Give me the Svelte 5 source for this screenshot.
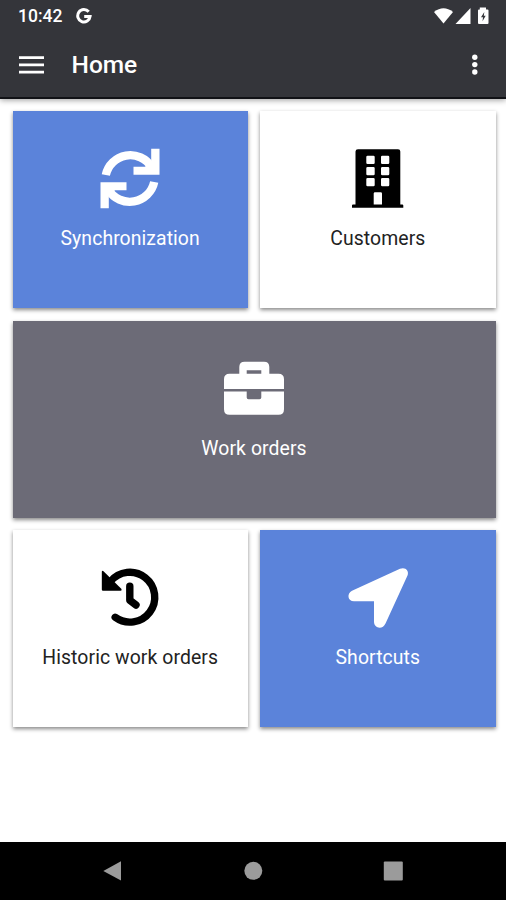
<script>
  const tiles = [
    { label: 'Synchronization', icon: 'sync', tone: 'blue' },
    { label: 'Customers', icon: 'building', tone: 'white' },
    { label: 'Work orders', icon: 'briefcase', tone: 'gray' },
    { label: 'Historic work orders', icon: 'history', tone: 'white' },
    { label: 'Shortcuts', icon: 'arrow', tone: 'blue' }
  ];
</script>

<div class="phone">
  <header>
    <div class="status">
      <span class="time">10:42</span>
      <svg class="google" width="16" height="16" viewBox="0 0 16 16"><path d="M12.7 3.8A6.2 6.2 0 1 0 14.1 8.4H8.2" fill="none" stroke="#fff" stroke-width="3" /></svg>
      <svg class="signals" width="60" height="20" viewBox="0 0 60 20" fill="#fff">
        <path d="M1 8Q10.5.5 20 8L10.5 19.5Z" />
        <path d="M37.5 4V20H22.5Z" />
        <path fill-rule="evenodd" d="M49.3 3.5H46.8V5.5H46Q45 5.5 45 6.5V19Q45 20 46 20H54.5Q55.5 20 55.5 19V6.5Q55.5 5.5 54.5 5.5H53V3.5ZM51.3 8L48 13.3H50L49.5 17.3L52.7 11.8H50.8Z" />
      </svg>
    </div>
    <div class="bar">
      <svg width="26" height="20" viewBox="0 0 26 20" fill="#fff"><path d="M0 1.2H25V3.9H0ZM0 8.6H25V11.3H0ZM0 15.8H25V18.5H0Z" /></svg>
      <h1>Home</h1>
      <svg class="more" width="8" height="24" viewBox="0 0 8 24" fill="#fff"><circle cx="3.8" cy="4.2" r="2.7" /><circle cx="3.8" cy="11.6" r="2.7" /><circle cx="3.8" cy="19" r="2.7" /></svg>
    </div>
  </header>

  <main>
    {#each tiles as tile}
      <section class={tile.tone}>
        <svg width="64" height="64" viewBox="0 0 64 64" fill="currentColor">
          {#if tile.icon === 'sync'}
            <path d="M7.8 28A25 25 0 0 1 53.5 20" fill="none" stroke="currentColor" stroke-width="8.4" />
            <path d="M53.2 1.8H61.5V27.8H35.5V19.8H47L53.2 14Z" />
            <path d="M56.2 35A25 25 0 0 1 10.5 43" fill="none" stroke="currentColor" stroke-width="8.4" />
            <path d="M10.8 61.2H2.5V35.2H28.5V43.2H17L10.8 49Z" />
          {:else if tile.icon === 'building'}
            <path fill-rule="evenodd" d="M12 2.3H52Q54.3 2.3 54.3 4.6V57.5H56.3Q57.3 57.5 57.3 58.5V60.8H6V58.5Q6 57.5 7 57.5H9.5V4.6Q9.5 2.3 12 2.3ZM21.5 8.7Q20.3 8.7 20.3 9.9V15.8Q20.3 17 21.5 17H27.5Q28.7 17 28.7 15.8V9.9Q28.7 8.7 27.5 8.7ZM36.2 8.7Q35 8.7 35 9.9V15.8Q35 17 36.2 17H42.1Q43.3 17 43.3 15.8V9.9Q43.3 8.7 42.1 8.7ZM21.5 20Q20.3 20 20.3 21.2V27.1Q20.3 28.3 21.5 28.3H27.5Q28.7 28.3 28.7 27.1V21.2Q28.7 20 27.5 20ZM36.2 20Q35 20 35 21.2V27.1Q35 28.3 36.2 28.3H42.1Q43.3 28.3 43.3 27.1V21.2Q43.3 20 42.1 20ZM21.5 31Q20.3 31 20.3 32.2V38.1Q20.3 39.3 21.5 39.3H27.5Q28.7 39.3 28.7 38.1V32.2Q28.7 31 27.5 31ZM36.2 31Q35 31 35 32.2V38.1Q35 39.3 36.2 39.3H42.1Q43.3 39.3 43.3 38.1V32.2Q43.3 31 42.1 31ZM29 45.3Q27.7 45.3 27.7 46.6V57.6H36V46.6Q36 45.3 34.7 45.3Z" />
          {:else if tile.icon === 'briefcase'}
            <path fill-rule="evenodd" d="M2 32V22.2Q2 16.7 7.5 16.7H17.3V10Q17.3 4.7 22.6 4.7H42Q47.3 4.7 47.3 10V16.7H56.5Q62 16.7 62 22.2V32ZM24.7 13.2V16.7H39.3V13.2Z" />
            <path d="M2 34.5H24.7V40.5Q24.7 42.3 26.5 42.3H37.5Q39.3 42.3 39.3 40.5V34.5H62V52.2Q62 57.7 56.5 57.7H7.5Q2 57.7 2 52.2Z" />
          {:else if tile.icon === 'history'}
            <path d="M12.5 15.5A24.9 24.9 0 1 1 17.2 51.3M31.8 20.3V34.2L38 39" fill="none" stroke="currentColor" stroke-width="7.4" stroke-linecap="round" stroke-linejoin="round" />
            <path d="M3.8 6Q3.8 4 5.5 5.3L23 22.5Q24.5 24.5 22.5 24.7H5Q3.8 24.7 3.8 23.5Z" />
          {:else}
            <path d="M54 2.8L6 24.8C.6 27.5 1.5 35.3 8 35.3H28V55.5C28 62.7 36.8 64 39.5 57.5L61.5 9.5C63.5 4.5 59 .5 54 2.8Z" />
          {/if}
        </svg>
        <span>{tile.label}</span>
      </section>
    {/each}
  </main>

  <nav>
    <svg width="20" height="22" viewBox="0 0 20 22"><path d="M18 1.2V20.5L.3 10.9Z" /></svg>
    <svg width="20" height="22" viewBox="0 0 20 22"><circle cx="10.3" cy="10.8" r="9" /></svg>
    <svg width="20" height="22" viewBox="0 0 20 22"><rect x=".8" y="1.6" width="19" height="19" rx="1" /></svg>
  </nav>
</div>

<style>
  .phone {
    width: 506px;
    height: 900px;
    display: flex;
    flex-direction: column;
    background: #fff;
    font-family: Roboto, sans-serif;
    overflow: hidden;
  }
  svg { display: block; flex: none; }
  header {
    height: 98.5px;
    box-sizing: border-box;
    background: #34353a;
    border-bottom: 2px solid #111216;
    box-shadow: 0 1px 6px #0006;
    color: #fff;
  }
  .status { display: flex; height: 32px; align-items: center; padding: 0 13px 0 18px; }
  .time { font-size: 17.5px; font-weight: 500; width: 58px; }
  .signals { margin: 0 0 4px auto; }
  .bar { display: flex; height: 65px; align-items: center; padding: 0 27px 0 19px; }
  h1 { margin: 0 0 0 26.5px; font-size: 24.5px; font-weight: 500; line-height: 30px; }
  .more { margin-left: auto; }
  main {
    flex: 1;
    display: grid;
    grid-template-columns: 1fr 1fr;
    grid-template-rows: repeat(3, 197px);
    gap: 12.3px;
    padding: 12.8px 10.5px 0 12.5px;
  }
  section {
    display: flex;
    flex-direction: column;
    align-items: center;
    padding-top: 36px;
    box-sizing: border-box;
    box-shadow: 0 2px 4px #0007;
  }
  .blue { background: #5b83da; color: #fff; }
  .gray { background: #6c6b77; color: #fff; grid-column: span 2; }
  .white { background: #fff; color: #000; }
  span { white-space: nowrap; }
  section span { margin-top: 16px; font-size: 19.4px; line-height: 24px; letter-spacing: 0.08px; }
  .white span { color: #222; }
  nav {
    height: 58px;
    background: #000;
    display: flex;
    justify-content: space-between;
    align-items: center;
    padding: 0 103px;
    fill: #9b9b9b;
  }
</style>
